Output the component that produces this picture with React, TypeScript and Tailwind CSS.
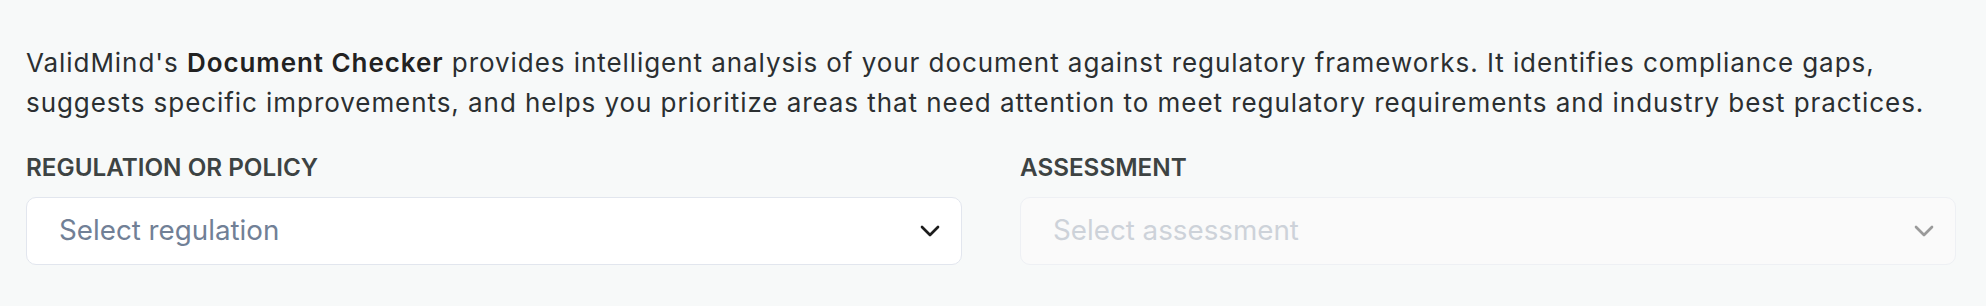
import { ChevronDown } from 'lucide-react';

const fieldLabel =
  'text-[24.25px] leading-[32px] font-semibold uppercase text-[#3d4343]';

export default function App() {
  return (
    <div
      className="min-h-[306px] bg-[#f7f9f9] pl-[26px] pr-[30px] pt-[43px]"
      style={{ fontFamily: 'Inter, "Noto Sans", sans-serif' }}
    >
      <p className="text-[26px] leading-[40px] tracking-[0.94px] text-[#2b2f31]">
        ValidMind's <span className="font-semibold text-[#222]">Document Checker</span>{' '}
        provides intelligent analysis of your document against regulatory
        frameworks. It identifies compliance gaps, suggests specific
        improvements, and helps you prioritize areas that need attention to
        meet regulatory requirements and industry best practices.
      </p>

      <div className="mt-[29px] grid grid-cols-2 gap-[58px]">
        <div>
          <div className={fieldLabel}>Regulation or Policy</div>
          <button className="mt-[13px] flex h-[68px] w-full items-center justify-between rounded-[10px] border border-[#e2e6ee] bg-white pl-[32px] pr-[15px] text-left">
            <span className="text-[27.75px] text-[#718096]">Select regulation</span>
            <ChevronDown size={32} strokeWidth={2} className="text-[#1c1c1c]" />
          </button>
        </div>
        <div>
          <div className={fieldLabel}>Assessment</div>
          <button
            disabled
            className="mt-[13px] flex h-[68px] w-full items-center justify-between rounded-[10px] border border-[#eef0f4] bg-[#fafafa] pl-[32px] pr-[15px] text-left"
          >
            <span className="text-[27.75px] text-[#cdd2d9]">Select assessment</span>
            <ChevronDown size={32} strokeWidth={2} className="text-[#9a9a9a]" />
          </button>
        </div>
      </div>
    </div>
  );
}
